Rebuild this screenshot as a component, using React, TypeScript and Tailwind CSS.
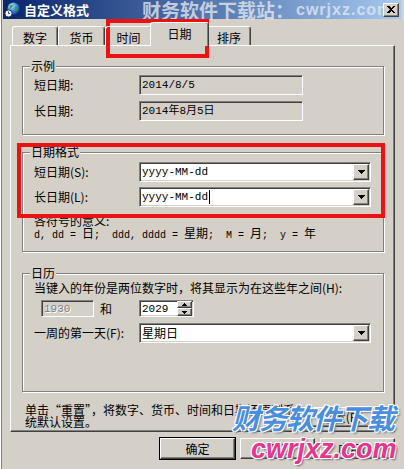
import type { ReactNode } from "react";

const cjk = "font-['Noto_Sans_CJK_SC','Noto_Sans',sans-serif]";
const mono = "font-['Liberation_Mono','Noto_Sans_CJK_SC',monospace]";
const raised =
  "bg-[#d4d0c8] border border-t-white border-l-white border-r-[#404040] border-b-[#404040] shadow-[inset_-1px_-1px_0_#808080]";
const sunken =
  "border border-t-[#808080] border-l-[#808080] border-r-white border-b-white shadow-[inset_1px_1px_0_#404040,inset_-1px_-1px_0_#d4d0c8]";

function Arrow({ up = false }: { up?: boolean }) {
  return (
    <svg width="7" height="4" viewBox="0 0 7 4" shapeRendering="crispEdges" className={up ? "rotate-180" : ""}>
      <path d="M0 0h7v1h-1v1h-1v1h-1v1h-1v-1h-1v-1h-1v-1h-1z" fill="#000" />
    </svg>
  );
}

function Combo({ children }: { children?: ReactNode }) {
  return (
    <div className={`${sunken} w-[232px] h-[20px] bg-white flex items-center`}>
      <div className="flex-1 pl-[2px] flex items-center">{children}</div>
      <div className={`${raised} mr-[1px] w-[16px] h-[16px] flex items-center justify-center`}>
        <Arrow />
      </div>
    </div>
  );
}

function Group({ label, className = "", children }: { label: string; className?: string; children: ReactNode }) {
  return (
    <fieldset
      className={`w-[362px] min-w-0 border border-[#808080] shadow-[inset_1px_1px_0_#fff,1px_1px_0_#fff] ${className}`}
    >
      <legend className="ml-[7px] px-[1px] bg-[#d4d0c8] leading-[12px]">{label}</legend>
      {children}
    </fieldset>
  );
}

function Globe() {
  return (
    <svg width="16" height="16" viewBox="0 0 16 16" className="ml-[1px]">
      <defs>
        <radialGradient id="g" cx="0.35" cy="0.3" r="0.8">
          <stop offset="0" stopColor="#bfe3ff" />
          <stop offset="0.5" stopColor="#3d8be0" />
          <stop offset="1" stopColor="#123f8f" />
        </radialGradient>
      </defs>
      <circle cx="9.5" cy="6.5" r="6" fill="url(#g)" />
      <path d="M6 3.5c1.5-1 3-.5 3.5.8-.8.6-1.8.4-2 1.6-.2 1-1.3 1.2-1.8.6z" fill="#3aa33a" />
      <path d="M11 5c1.2-.2 2.5.6 2.7 2-.5 1.2-1.6 2.2-2.4 2.3-.4-1.2-1.1-2.6-.3-4.3z" fill="#3aa33a" />
      <circle cx="4.5" cy="11.5" r="3.6" fill="#f4f4f4" stroke="#1b3560" strokeWidth="1" />
      <path d="M4.5 9.5v2h1.6" stroke="#1b3560" strokeWidth="0.9" fill="none" />
    </svg>
  );
}

export default function App() {
  return (
    <div
      className={`relative w-[404px] h-[469px] overflow-hidden bg-[#d4d0c8] text-black text-[12px] leading-[12px] shadow-[inset_1px_0_0_#ffffff,inset_2px_0_0_#808080] ${cjk}`}
    >
      {/* title bar */}
      <div className="relative mx-[3px] h-[19px] flex items-center bg-linear-to-r from-[#0a246a] to-[#a6caf0]">
        <Globe />
        <span className="ml-[4px] text-white font-bold text-[13px] leading-[13px]">自定义格式</span>
        <span className="absolute left-[139px] top-0 h-[19px] flex items-center font-bold text-[rgba(228,232,240,0.78)] whitespace-nowrap">
          <span className="text-[19px] leading-[19px]">财务软件下载站：</span>
          <span className="ml-[2px] text-[16px] leading-[16px] tracking-[1px] font-['Liberation_Sans',sans-serif]">cwrjxz.com</span>
        </span>
        <div className={`${raised} relative ml-auto mr-[2px] w-[16px] h-[14px] flex items-center justify-center`}>
          <svg width="8" height="7" viewBox="0 0 8 7" shapeRendering="crispEdges">
            <path d="M0 0h2l2 2 2-2h2L5 3.5 8 7H6L4 5 2 7H0l3-3.5z" fill="#000" />
          </svg>
        </div>
      </div>

      {/* tabs */}
      <div className="relative z-10 mt-[3px] h-[23px] pl-[12px] flex items-end">
        <div className="h-[19px] w-[46px] flex justify-center pt-[5px] rounded-t-[3px] border-t border-l border-r border-t-white border-l-white border-r-[#404040] shadow-[inset_-1px_0_0_#808080]">
          数字
        </div>
        <div className="h-[19px] w-[47px] flex justify-center pt-[5px] rounded-t-[3px] border-t border-l border-r border-t-white border-l-white border-r-[#404040] shadow-[inset_-1px_0_0_#808080]">
          货币
        </div>
        <div className="h-[19px] w-[47px] flex justify-center pt-[5px] rounded-t-[3px] border-t border-l border-r border-t-white border-l-white border-r-[#404040] shadow-[inset_-1px_0_0_#808080]">
          时间
        </div>
        <div className="relative z-10 -mx-[2px] -mb-[1px] h-[24px] w-[59px] flex justify-center pt-[5px] bg-[#d4d0c8] rounded-t-[3px] border-t border-l border-r border-t-white border-l-white border-r-[#404040] shadow-[inset_-1px_0_0_#808080]">
          日期
        </div>
        <div className="h-[19px] w-[44px] flex justify-center pt-[5px] rounded-t-[3px] border-t border-l border-r border-t-white border-l-white border-r-[#404040] shadow-[inset_-1px_0_0_#808080]">
          排序
        </div>
      </div>

      {/* tab page */}
      <div className="ml-[10px] w-[385px] h-[387px] pt-[14px] pl-[11px] border border-t-white border-l-white border-r-[#404040] border-b-[#404040] shadow-[inset_-1px_-1px_0_#808080]">
        <Group label="示例">
          <div className="pt-[3px] pb-[13px] pl-[11px] flex flex-col gap-[6px]">
            <div className="h-[20px] flex items-center">
              <span className="w-[105px]">短日期:</span>
              <div className={`${sunken} w-[164px] h-[20px] pl-[2px] flex items-center`}>
                <span className={`${mono} text-[11px]`}>2014/8/5</span>
              </div>
            </div>
            <div className="h-[20px] flex items-center">
              <span className="w-[105px]">长日期:</span>
              <div className={`${sunken} w-[164px] h-[20px] pl-[2px] flex items-center`}>
                <span className={`${mono} text-[11px]`}>2014年8月5日</span>
              </div>
            </div>
          </div>
        </Group>

        <Group label="日期格式" className="mt-[11px]">
          <div className="pt-[4px] pb-[9px] pl-[11px]">
            <div className="flex flex-col gap-[5px]">
              <div className="h-[20px] flex items-center">
                <span className="w-[105px]">短日期(S):</span>
                <Combo>
                  <span className={`${mono} text-[11px]`}>yyyy-MM-dd</span>
                </Combo>
              </div>
              <div className="h-[20px] flex items-center">
                <span className="w-[105px]">长日期(L):</span>
                <Combo>
                  <span className={`${mono} text-[11px]`}>yyyy-MM-dd</span>
                  <span className="ml-[1px] w-[1px] h-[14px] bg-black" />
                </Combo>
              </div>
            </div>
            <div className="mt-[8px]">各符号的意义:</div>
            <div className="whitespace-pre">
              <span className={`${mono} text-[10px]`}>d, dd = </span>日
              <span className={`${mono} text-[10px]`}>;  ddd, dddd = </span>星期
              <span className={`${mono} text-[10px]`}>;  M = </span>月
              <span className={`${mono} text-[10px]`}>;  y = </span>年
            </div>
          </div>
        </Group>

        <Group label="日历" className="mt-[15px]">
          <div className="pt-[3px] pb-[48px] pl-[11px]">
            <div className="whitespace-nowrap">当键入的年份是两位数字时，将其显示为在这些年之间(H):</div>
            <div className="mt-[6px] h-[17px] flex items-center">
              <div className={`${sunken} ml-[7px] w-[53px] h-[17px] pl-[2px] flex items-center`}>
                <span className={`${mono} text-[11px] text-[#808080] [text-shadow:1px_1px_0_#fff]`}>1930</span>
              </div>
              <span className="ml-[6px] w-[12px]">和</span>
              <div className={`${sunken} ml-[27px] w-[55px] h-[17px] bg-white pl-[2px] flex items-center`}>
                <span className={`${mono} text-[11px] flex-1`}>2029</span>
                <div className="mr-[1px] flex flex-col">
                  <div className={`${raised} w-[15px] h-[7px] flex items-center justify-center`}>
                    <svg width="5" height="3" viewBox="0 0 5 3" shapeRendering="crispEdges">
                      <path d="M2 0h1v1h1v1h1v1H0V2h1V1h1z" fill="#000" />
                    </svg>
                  </div>
                  <div className={`${raised} w-[15px] h-[8px] flex items-center justify-center`}>
                    <svg width="5" height="3" viewBox="0 0 5 3" shapeRendering="crispEdges">
                      <path d="M0 0h5v1H4v1H3v1H2V2H1V1H0z" fill="#000" />
                    </svg>
                  </div>
                </div>
              </div>
            </div>
            <div className="mt-[6px] h-[20px] flex items-center">
              <span className="w-[105px]">一周的第一天(F):</span>
              <Combo>
                <span className="text-[12px]">星期日</span>
              </Combo>
            </div>
          </div>
        </Group>

        <div className="mt-[12px] w-[362px] pl-[3px] flex items-start">
          <p className="leading-[12px]">
            单击“重置”，将数字、货币、时间和日期还原到系
            <br />
            统默认设置。
          </p>
          <div className={`${raised} ml-auto mt-[3px] w-[85px] h-[20px] flex items-center justify-center`}>
            重置(R)
          </div>
        </div>
      </div>

      {/* dialog buttons */}
      <div className="w-[395px] mt-[6px] flex justify-end gap-[5px]">
        <div className={`${raised} w-[75px] h-[21px] outline outline-1 outline-black flex items-center justify-center`}>
          确定
        </div>
        <div className={`${raised} w-[75px] h-[21px] flex items-center justify-center`}>取消</div>
        <div className={`${raised} w-[75px] h-[21px] flex items-center justify-center`}>应用(A)</div>
      </div>

      {/* red annotation frames */}
      <div className="absolute left-[106px] top-[19px] w-[103px] h-[39px] border-[4px] border-[#ee1111]" />
      <div className="absolute left-[17px] top-[143px] w-[368px] h-[75px] border-[4px] border-[#ee1111]" />

      {/* site watermark */}
      <div className="absolute left-[232px] top-[402px] text-[28px] leading-[30px] font-bold italic tracking-[-1px] text-[#4b8ede] whitespace-nowrap [text-shadow:1px_1px_0_#fff,-1px_-1px_0_#fff,1px_-1px_0_#fff,-1px_1px_0_#fff,2px_2px_2px_#6b7f99]">
        财务软件下载
      </div>
      <div className="absolute left-[251px] top-[434px] text-[27px] leading-[30px] font-bold italic tracking-[0px] text-[#e8358f] whitespace-nowrap font-['Liberation_Sans',sans-serif] [text-shadow:1px_1px_0_#fff,-1px_-1px_0_#fff,1px_-1px_0_#fff,-1px_1px_0_#fff,2px_2px_2px_#8a6a7a]">
        cwrjxz.com
      </div>
    </div>
  );
}
